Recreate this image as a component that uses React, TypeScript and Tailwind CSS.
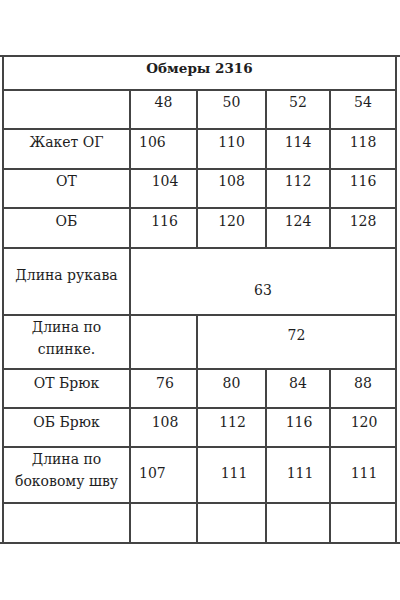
import type { ReactNode } from 'react'

type CellProps = {
  children?: ReactNode
  className?: string
}

function Cell({ children, className = '' }: CellProps) {
  return <div className={`flex bg-white ${className}`}>{children}</div>
}

const sizes = ['48', '50', '52', '54']

export default function App() {
  return (
    <div
      className="min-h-[600px] w-[400px] bg-white text-[#1e1e1e] text-[14px] leading-[21px]"
      style={{ fontFamily: '"DejaVu Serif", "Liberation Serif", serif' }}
    >
      <div className="h-[55px]" />
      <div className="border-y-2 border-[#444]">
        <div className="ml-[2px] grid w-[395px] grid-cols-[125px_65px_67px_62px_64px] grid-rows-[32px_37px_38px_37px_38px_65px_52px_37px_37px_54px_38px] gap-[2px] bg-[#444] px-[2px]">
          {/* header */}
          <Cell className="col-span-5 justify-center pt-[1px] text-[13.5px] font-bold">Обмеры 2316</Cell>

          {/* sizes */}
          <Cell />
          {sizes.map((s) => (
            <Cell key={s} className="justify-center pt-[1px]">
              {s}
            </Cell>
          ))}

          {/* Жакет ОГ */}
          <Cell className="justify-center pt-[2px]">Жакет ОГ</Cell>
          <Cell className="pl-[8px] pt-[2px]">106</Cell>
          <Cell className="justify-center pt-[2px]">110</Cell>
          <Cell className="justify-center pt-[2px]">114</Cell>
          <Cell className="justify-center pt-[2px]">118</Cell>

          {/* ОТ */}
          <Cell className="justify-center pt-[1px]">ОТ</Cell>
          <Cell className="justify-center pl-[3px] pt-[1px]">104</Cell>
          <Cell className="justify-center pt-[1px]">108</Cell>
          <Cell className="justify-center pt-[1px]">112</Cell>
          <Cell className="justify-center pt-[1px]">116</Cell>

          {/* ОБ */}
          <Cell className="justify-center pt-[2px]">ОБ</Cell>
          <Cell className="justify-center pl-[2px] pt-[2px]">116</Cell>
          <Cell className="justify-center pt-[2px]">120</Cell>
          <Cell className="justify-center pt-[2px]">124</Cell>
          <Cell className="justify-center pt-[2px]">128</Cell>

          {/* Длина рукава */}
          <Cell className="justify-center pt-[16px]">Длина рукава</Cell>
          <Cell className="col-span-4 justify-center pt-[31px]">63</Cell>

          {/* Длина по спинке */}
          <Cell className="justify-center pt-[0px] text-center leading-[22px]">
            Длина по
            <br />
            спинке.
          </Cell>
          <Cell />
          <Cell className="col-span-3 justify-center pt-[9px]">72</Cell>

          {/* ОТ Брюк */}
          <Cell className="justify-center pt-[3px]">ОТ Брюк</Cell>
          <Cell className="justify-center pl-[3px] pt-[3px]">76</Cell>
          <Cell className="justify-center pt-[3px]">80</Cell>
          <Cell className="justify-center pt-[3px]">84</Cell>
          <Cell className="justify-center pt-[3px]">88</Cell>

          {/* ОБ Брюк */}
          <Cell className="justify-center pt-[3px]">ОБ Брюк</Cell>
          <Cell className="justify-center pl-[3px] pt-[3px]">108</Cell>
          <Cell className="justify-center pl-[2px] pt-[3px]">112</Cell>
          <Cell className="justify-center pl-[2px] pt-[3px]">116</Cell>
          <Cell className="justify-center pl-[2px] pt-[3px]">120</Cell>

          {/* Длина по боковому шву */}
          <Cell className="justify-center text-center leading-[22px]">
            Длина по
            <br />
            боковому шву
          </Cell>
          <Cell className="pl-[8px] pt-[15px]">107</Cell>
          <Cell className="justify-center pl-[5px] pt-[15px]">111</Cell>
          <Cell className="justify-center pl-[4px] pt-[15px]">111</Cell>
          <Cell className="justify-center pl-[2px] pt-[15px]">111</Cell>

          {/* empty */}
          <Cell />
          <Cell />
          <Cell />
          <Cell />
          <Cell />
        </div>
      </div>
    </div>
  )
}
